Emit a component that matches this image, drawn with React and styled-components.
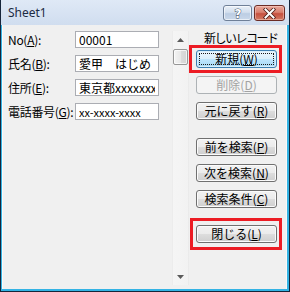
import React from 'react';
import styled, { createGlobalStyle, css } from 'styled-components';

const jp = `"Noto Sans CJK JP", "Noto Sans CJK SC", sans-serif`;

const GlobalStyle = createGlobalStyle`
  html, body { margin: 0; padding: 0; background: #ffffff; }
  body { width: 290px; height: 292px; overflow: hidden; font-family: ${jp}; }
  *, *::before, *::after { box-sizing: border-box; }
`;

const Window = styled.div`
  width: 290px;
  height: 292px;
  display: flex;
  flex-direction: column;
  border: 1px solid #16253a;
  border-top: none;
`;

const TitleBar = styled.div`
  height: 25px;
  flex: none;
  display: flex;
  align-items: flex-start;
  padding: 0 4px 0 7px;
  background: linear-gradient(#dfe9f6, #d0ddef);
`;

const TitleText = styled.div`
  flex: 1;
  font-family: "Noto Sans", sans-serif;
  font-size: 12px;
  line-height: 25px;
  color: #1b2b43;
`;

const CaptionButton = styled.div`
  height: 16px;
  margin-top: 5px;
  margin-left: 2px;
  border-radius: 3px;
  display: flex;
  align-items: center;
  justify-content: center;
  ${(p) =>
    p.$variant === 'close'
      ? css`
          width: 31px;
          border: 1px solid #6b2c25;
          background: linear-gradient(#e9a99b 0%, #d9806f 45%, #c6503f 55%, #d27a63 100%);
          box-shadow: inset 0 0 0 1px rgba(255, 220, 210, 0.45);
        `
      : css`
          width: 29px;
          border: 1px solid #6f8098;
          background: linear-gradient(#e9f0f8 0%, #d3dfee 45%, #bccde3 55%, #cad8ea 100%);
          box-shadow: inset 0 0 0 1px rgba(255, 255, 255, 0.6);
        `}
`;

const Frame = styled.div`
  flex: 1;
  display: flex;
  padding: 0 2px 2px 1px;
  background: #33b3e4;
`;

const Client = styled.div`
  flex: 1;
  position: relative;
  display: flex;
  align-items: flex-start;
  background: #f0f0f0;
  border-left: 1px solid #f9f9f9;
  border-right: 1px solid #f9f9f9;
`;

const FormGrid = styled.div`
  display: grid;
  grid-template-columns: 67px 84px;
  grid-auto-rows: 17px;
  row-gap: 7px;
  margin: 6px 0 0 5px;
`;

const FieldLabel = styled.label`
  font-family: ${jp};
  font-size: 12px;
  line-height: 17px;
  letter-spacing: -0.3px;
  color: #000;
  white-space: nowrap;
`;

const Key = styled.span`
  text-decoration: underline;
  text-underline-offset: 1px;
`;

const Field = styled.input`
  width: 84px;
  height: 17px;
  margin: 0;
  padding: 0 3px;
  border: 1px solid #abadb3;
  background: #ffffff;
  font-family: ${jp};
  font-size: ${(p) => (p.$small ? '11px' : '12px')};
  color: #000;
  outline: none;
`;

const ScrollBar = styled.div`
  align-self: stretch;
  width: 17px;
  margin: 6px 0 4px 13px;
  display: flex;
  flex-direction: column;
  background: linear-gradient(to right, #e3e3e3 0, #f5f5f5 1px, #f2f2f2 calc(100% - 1px), #e3e3e3 100%);
`;

const ScrollArrow = styled.div`
  height: 17px;
  flex: none;
  display: flex;
  align-items: center;
  justify-content: center;
`;

const Thumb = styled.div`
  height: 16px;
  margin: 1px 1px 0 1px;
  border: 1px solid #979797;
  border-radius: 2px;
  background: linear-gradient(to right, #f4f4f4 0%, #e8e8e8 50%, #dcdcdc 51%, #d4d4d4 100%);
  box-shadow: inset 0 0 0 1px rgba(255, 255, 255, 0.7);
`;

const Track = styled.div`
  flex: 1;
`;

const ButtonColumn = styled.div`
  width: 81px;
  margin: 6px 0 0 7px;
  display: flex;
  flex-direction: column;
`;

const RecordLabel = styled.div`
  height: 14px;
  margin-bottom: 5px;
  padding-left: 8px;
  font-family: ${jp};
  font-size: 12px;
  line-height: 14px;
  letter-spacing: -1.5px;
  text-align: center;
  white-space: nowrap;
  color: #000;
`;

const FormButton = styled.button`
  position: relative;
  width: 81px;
  height: 18px;
  margin: ${(p) => p.$gap || 0}px 0 0 0;
  padding: 0;
  border-radius: 3px;
  font-family: ${jp};
  font-size: 12px;
  line-height: 16px;
  color: #000;
  white-space: nowrap;
  border: 1px solid #707070;
  background: linear-gradient(#f2f2f2 0%, #ebebeb 50%, #dddddd 51%, #cfcfcf 100%);
  box-shadow: inset 0 0 0 1px #fbfbfb;
  ${(p) =>
    p.$default &&
    css`
      border-color: #3c7fb1;
      background: linear-gradient(#eaf6fd 0%, #d9f0fc 50%, #bee6fd 51%, #a7d9f5 100%);
      box-shadow: inset 0 0 0 1px #d8f0fb;
      &::after {
        content: '';
        position: absolute;
        inset: 2px;
        border: 1px dotted #1a1a1a;
      }
    `}
  ${(p) =>
    p.disabled &&
    css`
      border-color: #adb2b5;
      background: #f4f4f4;
      box-shadow: none;
      color: #a3a3a3;
    `}
`;

const Callout = styled.div`
  position: absolute;
  left: ${(p) => p.$x}px;
  top: ${(p) => p.$y}px;
  width: ${(p) => p.$w}px;
  height: ${(p) => p.$h}px;
  border: 3px solid #ec1c24;
  pointer-events: none;
`;

const HelpIcon = () => (
  <svg width="12" height="12" viewBox="0 0 12 12">
    <text
      x="6"
      y="10.5"
      textAnchor="middle"
      fontFamily="DejaVu Sans, sans-serif"
      fontWeight="bold"
      fontSize="12"
      fill="#ffffff"
      stroke="#3c4d63"
      strokeWidth="0.9"
      paintOrder="stroke"
    >
      ?
    </text>
  </svg>
);

const CloseIcon = () => (
  <svg width="13" height="11" viewBox="0 0 13 11">
    <path d="M2.5 1.5 L10.5 9.5 M10.5 1.5 L2.5 9.5" stroke="#4a1c17" strokeWidth="3.6" strokeLinecap="square" />
    <path d="M2.5 1.5 L10.5 9.5 M10.5 1.5 L2.5 9.5" stroke="#ffffff" strokeWidth="2" strokeLinecap="square" />
  </svg>
);

const ArrowUp = () => (
  <svg width="7" height="4" viewBox="0 0 7 4">
    <path d="M0 4 L3.5 0 L7 4 Z" fill="#5a5a5a" />
  </svg>
);

const ArrowDown = () => (
  <svg width="7" height="4" viewBox="0 0 7 4">
    <path d="M0 0 L7 0 L3.5 4 Z" fill="#5a5a5a" />
  </svg>
);

const fields = [
  { label: 'No', key: 'A', value: '00001' },
  { label: '氏名', key: 'B', value: '愛甲　はじめ' },
  { label: '住所', key: 'E', value: '東京都xxxxxxxxx' },
  { label: '電話番号', key: 'G', value: 'xx-xxxx-xxxx', small: true },
];

const buttons = [
  { text: '新規', key: 'W', gap: 0, isDefault: true },
  { text: '削除', key: 'D', gap: 8, disabled: true },
  { text: '元に戻す', key: 'R', gap: 8 },
  { text: '前を検索', key: 'P', gap: 18 },
  { text: '次を検索', key: 'N', gap: 8 },
  { text: '検索条件', key: 'C', gap: 8 },
  { text: '閉じる', key: 'L', gap: 17 },
];

export default function App() {
  return (
    <>
      <GlobalStyle />
      <Window>
        <TitleBar>
          <TitleText>Sheet1</TitleText>
          <CaptionButton $variant="help">
            <HelpIcon />
          </CaptionButton>
          <CaptionButton $variant="close">
            <CloseIcon />
          </CaptionButton>
        </TitleBar>
        <Frame>
          <Client>
            <FormGrid>
              {fields.map((f) => (
                <React.Fragment key={f.key}>
                  <FieldLabel>
                    {f.label}(<Key>{f.key}</Key>):
                  </FieldLabel>
                  <Field readOnly defaultValue={f.value} $small={f.small} />
                </React.Fragment>
              ))}
            </FormGrid>
            <ScrollBar>
              <ScrollArrow>
                <ArrowUp />
              </ScrollArrow>
              <Thumb />
              <Track />
              <ScrollArrow>
                <ArrowDown />
              </ScrollArrow>
            </ScrollBar>
            <ButtonColumn>
              <RecordLabel>新しいレコード</RecordLabel>
              {buttons.map((b) => (
                <FormButton key={b.key} $gap={b.gap} $default={b.isDefault} disabled={b.disabled}>
                  {b.text}(<Key>{b.key}</Key>)
                </FormButton>
              ))}
            </ButtonColumn>
            <Callout $x={186} $y={20} $w={93} $h={28} />
            <Callout $x={187} $y={193} $w={92} $h={32} />
          </Client>
        </Frame>
      </Window>
    </>
  );
}
